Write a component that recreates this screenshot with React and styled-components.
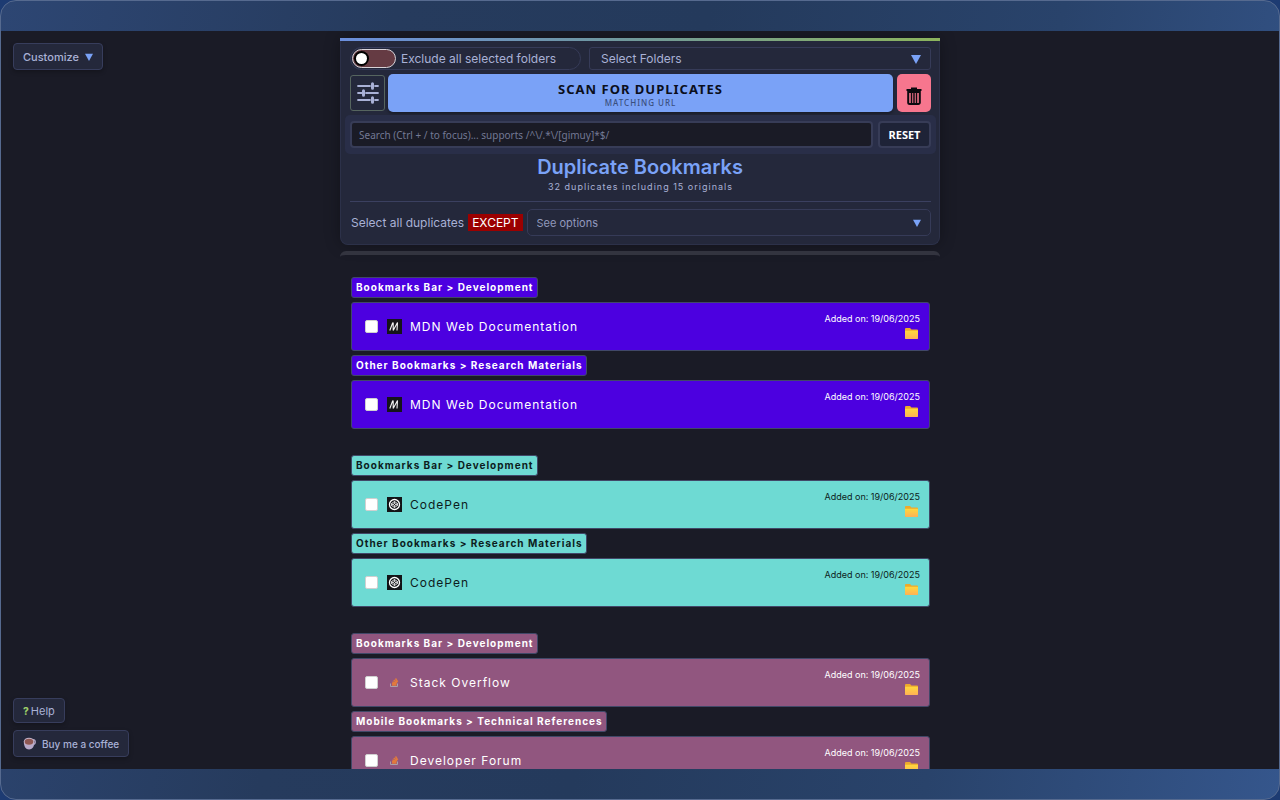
import React, { useState } from "react";
import styled, { createGlobalStyle } from "styled-components";

const GlobalStyle = createGlobalStyle`
  * {
    box-sizing: border-box;
  }

  body {
    margin: 0;
    background: #1d3b72;
    font-family: "Inter", sans-serif;
    color: #a9b1d6;
  }

  button,
  input,
  select {
    font-family: inherit;
    color: inherit;
    margin: 0;
  }
`;

const Frame = styled.div`
  height: 100vh;
  display: flex;
  padding: 30px 0;
  overflow: hidden;
  border: 1px solid #566a8f;
  border-radius: 16px;
  background: linear-gradient(100deg, #2d4673, #263b5d 28%, #243a5c 50%, #29436b 75%, #35568c);
`;

const Content = styled.div`
  flex: 1;
  min-height: 0;
  display: grid;
  grid-template-columns: minmax(140px, 1fr) minmax(0, 600px) minmax(0, 1fr);
  overflow: hidden;
  background: #1a1b26;
`;

const Side = styled.aside`
  display: flex;
  flex-direction: column;
  align-items: flex-start;
  gap: 7px;
  min-height: 0;
  padding: 12px;
`;

const SideButton = styled.button`
  display: flex;
  align-items: center;
  gap: ${(props) => props.$gap || "6px"};
  height: ${(props) => props.$height || "27px"};
  padding: 0 9px;
  font-size: ${(props) => props.$size || "11px"};
  font-weight: ${(props) => props.$weight || 500};
  color: #a9b1d6;
  background: #24283b;
  border: 1px solid #373d5c;
  border-radius: 4px;
  box-shadow: 0 2px 4px #00000040;
  cursor: pointer;
`;

const Spacer = styled.div`
  flex: 1;
`;

const Question = styled.span`
  font-size: 10px;
  font-weight: 800;
  color: #9ece6a;
`;

const Main = styled.main`
  display: flex;
  flex-direction: column;
  min-height: 0;
  padding-top: 7px;
`;

const Panel = styled.section`
  flex: none;
  display: flex;
  flex-direction: column;
  padding-bottom: 8px;
  background: #24283b;
  border: 1px solid #2c3149;
  border-top: none;
  border-radius: 0 0 8px 8px;
  box-shadow: 0 0 16px #00000050;

  &::before {
    content: "";
    height: 3px;
    margin: 0 -1px;
    background: linear-gradient(90deg, #6b8fdd, #6f979f 45%, #8cb45d);
  }
`;

const Row = styled.div`
  display: flex;
  gap: ${(props) => props.$gap || "4px"};
  padding: 0 8px 0 9px;
  margin-top: ${(props) => props.$top || "0"};
`;

const ToggleLabel = styled.label`
  display: flex;
  align-items: center;
  gap: 5px;
  width: 231px;
  height: 23px;
  padding-left: 1px;
  font-size: 12px;
  border: 1px solid #363b58;
  border-radius: 12px;
  white-space: nowrap;
`;

const Toggle = styled.input`
  appearance: none;
  flex: none;
  display: flex;
  align-items: center;
  width: 44px;
  height: 19px;
  padding: 0 3px;
  background: #653b43;
  border: 1px solid #d8d3d8;
  border-radius: 10px;
  cursor: pointer;

  &::before {
    content: "";
    width: 11px;
    height: 11px;
    background: white;
    border-radius: 50%;
    box-shadow: 0 0 0 2px #000000;
  }

  &:checked {
    justify-content: flex-end;
  }
`;

const SelectBox = styled.div`
  flex: 1;
  display: flex;
  align-items: center;
  height: ${(props) => props.$height || "23px"};
  padding-right: 9px;
  border: 1px solid #363b58;
  border-radius: ${(props) => props.$radius || "3px"};
`;

const Select = styled.select`
  appearance: none;
  flex: 1;
  height: 100%;
  padding: 0 ${(props) => props.$pad || "11px"};
  font-size: ${(props) => props.$size || "12px"};
  color: ${(props) => props.$color || "#a9b1d6"};
  background: transparent;
  border: none;
  outline: none;
`;

const OptionsButton = styled.button`
  display: flex;
  align-items: center;
  justify-content: center;
  width: 35px;
  height: 36px;
  margin: 1px -1px 0 0;
  padding: 0;
  background: #24283b;
  border: 1px solid #56655f;
  border-radius: 3px;
`;

const ScanButton = styled.button`
  flex: 1;
  display: flex;
  flex-direction: column;
  align-items: center;
  justify-content: center;
  height: 38px;
  padding: 4px 0 0;
  font-family: "Noto Sans", sans-serif;
  font-size: 13px;
  line-height: 16px;
  font-weight: 700;
  letter-spacing: 1px;
  color: #0b0f1c;
  background: #7aa2f7;
  border: none;
  border-radius: 5px;
  box-shadow: 0 2px 3px #00000050;
  cursor: pointer;
`;

const ScanMode = styled.span`
  font-size: 8px;
  line-height: 12px;
  font-weight: 500;
  color: #3a4f80;
`;

const DeleteButton = styled.button`
  display: flex;
  align-items: center;
  justify-content: center;
  width: 34px;
  height: 38px;
  padding: 6px 0 0;
  background: #f7768e;
  border: none;
  border-radius: 5px;
  cursor: pointer;
`;

const SearchBar = styled.form`
  display: flex;
  gap: 5px;
  height: 39px;
  margin: 3px 3px 0 4px;
  padding: 6px 5px;
  background: #292e48;
  border-radius: 5px;
`;

const SearchInput = styled.input`
  flex: 1;
  min-width: 0;
  padding: 0 7px;
  font-family: "Noto Sans", sans-serif;
  font-size: 10px;
  color: #a9b1d6;
  background: #1a1b26;
  border: 2px solid #373c57;
  border-radius: 4px;
  outline: none;

  &::placeholder {
    color: #737994;
    opacity: 1;
  }
`;

const ResetButton = styled.button`
  width: 53px;
  padding: 0;
  font-family: "Noto Sans", sans-serif;
  font-size: 11px;
  font-weight: 700;
  color: white;
  background: #1e2337;
  border: 2px solid #373c57;
  border-radius: 4px;
  cursor: pointer;
`;

const Title = styled.h1`
  margin: 0;
  font-size: 20px;
  line-height: 26px;
  font-weight: 600;
  text-align: center;
  color: #7aa2f7;
`;

const Summary = styled.p`
  margin: 0 8px 0 9px;
  padding-bottom: 8px;
  font-size: 9px;
  line-height: 13px;
  letter-spacing: 1px;
  text-align: center;
  border-bottom: 1px solid #3b4060;
`;

const ExceptLabel = styled.label`
  display: flex;
  align-items: center;
  gap: 4px;
  padding-left: 1px;
  font-size: 12px;
  white-space: nowrap;
`;

const Except = styled.span`
  padding: 0 4px;
  line-height: 17px;
  color: white;
  background: #9b0000;
`;

const Results = styled.section`
  flex: 1;
  min-height: 0;
  display: flex;
  flex-direction: column;
  gap: 26px;
  margin-top: 6px;
  padding: 22px 10px 0 11px;
  overflow: hidden;
  border-top: 4px solid #33343f;
  border-radius: 6px 6px 0 0;
`;

const Group = styled.div`
  flex: none;
  display: flex;
  flex-direction: column;
  align-items: flex-start;
  gap: 4px;
  color: ${(props) => props.$color};
`;

const Path = styled.h2`
  margin: 0;
  padding: 0 3px 0 4px;
  font-size: 10px;
  line-height: 19px;
  font-weight: 700;
  letter-spacing: 1px;
  background: ${(props) => props.$background};
  border: 1px solid #414868;
  border-radius: 3px;
`;

const Card = styled.article`
  display: flex;
  align-items: center;
  justify-content: space-between;
  width: 100%;
  height: 49px;
  padding: 0 9px 1px 13px;
  background: ${(props) => props.$background};
  border: 1px solid #414868;
  border-radius: 3px;
`;

const CardLabel = styled.label`
  display: flex;
  align-items: center;
  gap: 8px;
  font-size: 12px;
  letter-spacing: 1px;
`;

const Checkbox = styled.input`
  appearance: none;
  width: 13px;
  height: 13px;
  margin-right: 1px;
  background: white;
  border: 1px solid #d0d0d0;
  border-radius: 2px;

  &:checked {
    background: #7aa2f7;
  }
`;

const Meta = styled.div`
  display: flex;
  flex-direction: column;
  align-items: flex-end;
  gap: 3px;
  font-size: 9px;
  line-height: 12px;
`;

const FolderButton = styled.button`
  display: flex;
  padding: 0 2px 0 0;
  background: none;
  border: none;
  cursor: pointer;
`;

const Arrow = ({ size = 8 }) => (
  <svg width={size} height={size} viewBox="0 0 10 10" aria-hidden="true">
    <path d="M0 1h10L5 10z" fill="#7aa2f7" />
  </svg>
);

const SlidersIcon = () => (
  <svg width="24" height="24" viewBox="0 0 24 24" fill="none" stroke="#a9b1d6" strokeLinecap="round">
    <path d="M2 5h12M19 5h3M2 12h4M10 12h12M2 19h12M19 19h3" strokeWidth="1.8" />
    <path d="M16.500 2.700v4.600M7.500 9.700v4.600M16.500 16.700v4.600" strokeWidth="3" />
  </svg>
);

const TrashIcon = () => (
  <svg width="16" height="18" viewBox="0 0 16 18" fill="none" stroke="#0a0a0f">
    <path d="M.5 3h15M5 1.500h6" strokeWidth="2" />
    <path d="M2.200 5v10.500a1.500 1.500 0 0 0 1.500 1.500h8.600a1.500 1.500 0 0 0 1.500-1.500V5z" strokeWidth="2" />
    <path d="M5.500 6v10M8 6v10M10.500 6v10" strokeWidth="1.500" />
  </svg>
);

const FolderIcon = () => (
  <svg width="13" height="11" viewBox="0 0 13 12" preserveAspectRatio="none">
    <defs>
      <linearGradient id="folder" x1="0" y1="0" x2="0" y2="1">
        <stop offset="0" stopColor="#ffd83c" />
        <stop offset="1" stopColor="#ffb156" />
      </linearGradient>
    </defs>
    <path d="M0 1q0-1 1-1h4l1.500 1.500H12q1 0 1 1V11q0 1-1 1H1q-1 0-1-1z" fill="#eda92c" />
    <path d="M0 3h13v8q0 1-1 1H1q-1 0-1-1z" fill="url(#folder)" />
  </svg>
);

const CoffeeIcon = () => (
  <svg width="13" height="13" viewBox="0 0 13 13">
    <circle cx="10" cy="5" r="2.300" fill="none" stroke="#b7a9c9" strokeWidth="1.200" />
    <path d="M.8 4.500c0 5 2 8 5.200 8s5.500-3 5.500-8z" fill="#b7a9c9" />
    <ellipse cx="6" cy="4.500" rx="5.200" ry="3.800" fill="#c4b4c9" />
    <ellipse cx="6" cy="4.700" rx="4.300" ry="3" fill="#8e5753" />
  </svg>
);

const MdnIcon = () => (
  <svg width="15" height="15" viewBox="0 0 15 15">
    <path d="M0 0h15v15H0z" fill="#15141a" />
    <path d="M2.800 11.500L5.800 3.500M6.200 3.500V11.500M6.200 11.500L10.500 3.500L10 11.500" fill="none" stroke="#f4f4f4" strokeWidth="1.100" />
  </svg>
);

const CodePenIcon = () => (
  <svg width="15" height="15" viewBox="0 0 15 15" fill="none" stroke="white">
    <path d="M0 0h15v15H0z" fill="#131417" stroke="none" />
    <circle cx="7.500" cy="7.500" r="5" strokeWidth="1.300" />
    <path d="M7.500 4.500l3 2v2l-3 2-3-2v-2zM7.500 4.500v2M7.500 8.500v2M4.500 6.500l3 2 3-2M4.500 8.500l3-2 3 2" strokeWidth=".8" />
  </svg>
);

const StackIcon = () => (
  <svg width="15" height="15" viewBox="0 0 15 15" fill="none">
    <path d="M3.500 8.500v3h7v-3" stroke="#aaa1a8" strokeWidth="1" />
    <path d="M5 10h4.500M5 8.500l4.500.8M5.500 6.800l4.200 1.600M6.700 5l3.500 2.600M8.500 3.500l2.200 3.300" stroke="#e27a3c" strokeWidth="1.400" />
  </svg>
);

const GROUPS = [
  {
    background: "#4c00e0",
    color: "#ffffff",
    icon: MdnIcon,
    items: [
      { path: "Bookmarks Bar > Development", name: "MDN Web Documentation" },
      { path: "Other Bookmarks > Research Materials", name: "MDN Web Documentation" },
    ],
  },
  {
    background: "#6edad3",
    color: "#0c1c20",
    icon: CodePenIcon,
    items: [
      { path: "Bookmarks Bar > Development", name: "CodePen" },
      { path: "Other Bookmarks > Research Materials", name: "CodePen" },
    ],
  },
  {
    background: "#91567f",
    color: "#ffffff",
    icon: StackIcon,
    items: [
      { path: "Bookmarks Bar > Development", name: "Stack Overflow" },
      { path: "Mobile Bookmarks > Technical References", name: "Developer Forum" },
    ],
  },
];

const Bookmark = ({ item, background, icon: Icon }) => (
  <>
    <Path $background={background}>{item.path}</Path>
    <Card $background={background}>
      <CardLabel>
        <Checkbox type="checkbox" />
        <Icon />
        {item.name}
      </CardLabel>
      <Meta>
        <span>Added on: 19/06/2025</span>
        <FolderButton aria-label="Open folder">
          <FolderIcon />
        </FolderButton>
      </Meta>
    </Card>
  </>
);

const App = () => {
  const [search, setSearch] = useState("");

  return (
    <>
      <GlobalStyle />
      <Frame>
        <Content>
          <Side>
            <SideButton>
              Customize <Arrow />
            </SideButton>
            <Spacer />
            <SideButton $gap="2px" $height="25px" $weight={400}>
              <Question>?</Question> Help
            </SideButton>
            <SideButton $size="10px">
              <CoffeeIcon /> Buy me a coffee
            </SideButton>
          </Side>

          <Main>
            <Panel>
              <Row $gap="8px" $top="6px">
                <ToggleLabel>
                  <Toggle type="checkbox" />
                  Exclude all selected folders
                </ToggleLabel>
                <SelectBox>
                  <Select aria-label="Select Folders">
                    <option>Select Folders</option>
                  </Select>
                  <Arrow size={10} />
                </SelectBox>
              </Row>

              <Row $top="4px">
                <OptionsButton aria-label="Scan options">
                  <SlidersIcon />
                </OptionsButton>
                <ScanButton>
                  SCAN FOR DUPLICATES
                  <ScanMode>MATCHING URL</ScanMode>
                </ScanButton>
                <DeleteButton aria-label="Delete selected">
                  <TrashIcon />
                </DeleteButton>
              </Row>

              <SearchBar onSubmit={(e) => e.preventDefault()}>
                <SearchInput
                  aria-label="Search"
                  placeholder="Search (Ctrl + / to focus)... supports /^\/.*\/[gimuy]*$/"
                  value={search}
                  onChange={(e) => setSearch(e.target.value)}
                />
                <ResetButton type="button" onClick={() => setSearch("")}>
                  RESET
                </ResetButton>
              </SearchBar>

              <Title>Duplicate Bookmarks</Title>
              <Summary>32 duplicates including 15 originals</Summary>

              <Row $top="7px">
                <ExceptLabel htmlFor="except">
                  Select all duplicates <Except>EXCEPT</Except>
                </ExceptLabel>
                <SelectBox $height="27px" $radius="5px">
                  <Select id="except" $size="11px" $pad="9px" $color="#9299bd">
                    <option>See options</option>
                  </Select>
                  <Arrow />
                </SelectBox>
              </Row>
            </Panel>

            <Results>
              {GROUPS.map((group, i) => (
                <Group key={i} $color={group.color}>
                  {group.items.map((item) => (
                    <Bookmark
                      key={item.path}
                      item={item}
                      background={group.background}
                      icon={group.icon}
                    />
                  ))}
                </Group>
              ))}
            </Results>
          </Main>
        </Content>
      </Frame>
    </>
  );
};

export default App;
